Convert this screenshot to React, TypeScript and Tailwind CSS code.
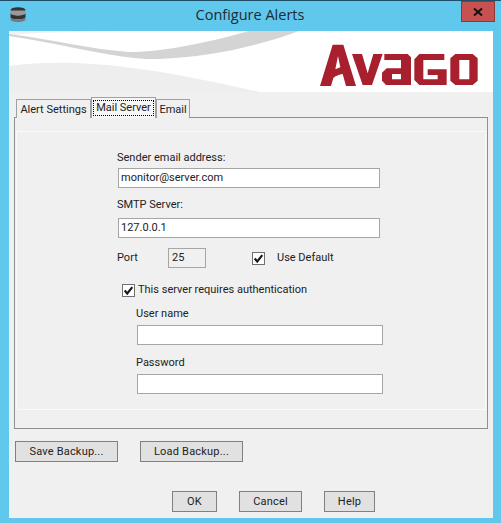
export default function App() {
  const input = "block bg-white border border-[#a6a6a6] leading-[18px] pl-[2px] text-[#222]";
  const btn = "flex items-center justify-center h-[21px] pt-[1px] bg-[#e1e1e1] border border-[#808080] text-[11px] text-[#222] tracking-[0.2px]";
  const Check = () => (
    <span className="flex items-center justify-center w-[13px] h-[13px] bg-white border border-[#707070] shrink-0">
      <svg viewBox="0 0 13 13" className="w-[11px] h-[11px]">
        <path d="M2 6.500 L5 10 L11 2.500" fill="none" stroke="#1a1a1a" strokeWidth="2.6" />
      </svg>
    </span>
  );
  return (
    <div className="relative w-[501px] h-[523px] overflow-hidden bg-[#60c8ec] border-t border-[#1f4f66] pl-[9px] pr-[8px] font-['Roboto',sans-serif] text-[#222] whitespace-nowrap">
      <div className="relative h-[30px] flex items-center justify-center">
        <svg viewBox="0 0 16 16" className="absolute left-[1px] top-[6px] w-[16px] h-[16px]">
          <ellipse cx="8" cy="3" rx="7.500" ry="2.800" fill="#333" />
          <path d="M.5 3.500h15v3c0 1.400-3.300 2.400-7.500 2.400S.5 7.900.5 6.500z" fill="#999" />
          <path d="M.5 6.500c1 1.400 4.300 2.200 7.500 2.200s6.500-.8 7.500-2.200v3.500c0 1.400-3.300 2.300-7.500 2.300S.5 11.400.5 10z" fill="#333" />
          <path d="M.5 10.500c1 1.300 4.300 2.200 7.500 2.200s6.500-.9 7.500-2.200v2c0 1.300-3.300 2.500-7.500 2.500S.5 13.800.5 12.500z" fill="#777" />
        </svg>
        <span className="text-[14.5px] text-[#1c2b33] font-['Open_Sans',sans-serif] relative top-[-1px] left-[-1px]">Configure Alerts</span>
      </div>
      <div className="absolute left-[461px] top-0 w-[34px] h-[21px] bg-[#c75050] border border-[#8a3a3a] flex items-center justify-center">
        <svg viewBox="0 0 10 8" className="w-[10px] h-[8px]">
          <path d="M1 0.500 L9 7.500 M9 0.500 L1 7.500" stroke="#111" strokeWidth="2" />
        </svg>
      </div>

      <div className="w-[484px] h-[487px] bg-[#f0f0f0] flex flex-col">
        <div className="relative h-[61px] bg-white overflow-hidden flex items-start justify-end pt-[9px] pr-[11px]">
          <svg viewBox="0 0 484 61" className="absolute inset-0 w-[484px] h-[61px]">
            <path d="M0 4 C40 1 80 0 120 0 L0 0Z" fill="#f1f1f1" />
            <path d="M0 5 C70 16 110 29 150 28 C200 26 250 15 290 0 L240 0 C190 14 150 21 120 21 C80 18 40 8 0 3Z" fill="#d4d4d4" />
            <path d="M0 35 C60 27 130 33 250 61 L0 61Z" fill="#eeeeee" />
          </svg>
          <svg viewBox="0 0 498 150" className="relative w-[166px] h-[50px]">
            <g fill="#a81f2e" fillRule="evenodd">
              <path d="M12 138 L50 14 L82 14 L120 138 L90 138 L80 102 C70 104 58 108 52 114 L45 138 Z M58 88 C63 86 68 84 73 82 L66 48 Z" />
              <path d="M108 42 L138 42 L155 100 L172 42 L200 42 L168 135 L140 135 Z" />
              <path d="M205 42 L275 42 L285 52 L285 135 L210 135 L198 122 L198 98 L212 85 L255 85 L255 60 L205 60 Z M228 102 L228 118 L255 118 L255 102 Z" />
              <path d="M310 42 L385 42 L385 60 L322 60 L322 118 L365 118 L365 105 L335 105 L335 88 L392 88 L392 135 L310 135 L295 120 L295 58 Z" />
              <path d="M418 42 L470 42 L485 55 L485 122 L470 135 L418 135 L403 122 L403 55 Z M430 60 L430 118 L460 118 L460 60 Z" />
            </g>
          </svg>
        </div>

        <div className="px-[5px] pt-[5px]">
          <div className="relative z-10 flex items-end h-[21px] pl-[2px] mb-[-1px] text-[11px]">
            <div className="h-[19px] w-[75px] bg-[#f0f0f0] border border-b-0 border-[#a0a0a0] flex items-center justify-center pt-[2px]">Alert Settings</div>
            <div className="h-[21px] w-[65px] bg-[#f6f6f6] border border-b-0 border-[#a0a0a0] flex items-center justify-center pb-[1px]">
              <span className="border border-dotted border-black px-[2px] leading-[14px]">Mail Server</span>
            </div>
            <div className="h-[19px] w-[34px] bg-[#f0f0f0] border border-b-0 border-[#a0a0a0] flex items-center justify-center pt-[2px]">Email</div>
          </div>
          <div className="w-[474px] h-[312px] border border-[#8f8f8f] bg-[#f0f0f0] pt-[13px] pl-[1px] pr-[2px]">
            <div className="w-[470px] h-[279px] border border-[#fafafa] pl-[100px] pt-[17px] text-[11px]">
              <div className="leading-[18px]">Sender email address:</div>
              <div className={input + " w-[262px] h-[20px] mt-[1px] mb-[9px] ml-[1px]"}>monitor@server.com</div>
              <div className="leading-[16px]">SMTP Server:</div>
              <div className={input + " w-[262px] h-[20px] mt-[5px] ml-[1px]"}>127.0.0.1</div>
              <div className="flex items-center h-[20px] mt-[10px]">
                <span className="w-[51px]">Port</span>
                <div className="w-[38px] h-[20px] border border-[#a6a6a6] bg-[#f0f0f0] pl-[3px] leading-[18px]">25</div>
                <span className="ml-[46px]"><Check /></span>
                <span className="ml-[12px]">Use Default</span>
              </div>
              <div className="flex items-center h-[16px] mt-[14px] ml-[5px]">
                <Check />
                <span className="ml-[3px]">This server requires authentication</span>
              </div>
              <div className="leading-[18px] mt-[7px] ml-[19px]">User name</div>
              <div className={input + " w-[246px] h-[20px] mt-[2px] ml-[20px]"}></div>
              <div className="leading-[18px] mt-[9px] ml-[19px]">Password</div>
              <div className={input + " w-[246px] h-[20px] mt-[2px] ml-[20px]"}></div>
            </div>
          </div>
        </div>

        <div className="flex pl-[6px] mt-[12px] gap-[22px]">
          <div className={btn + " w-[103px]"}>Save Backup...</div>
          <div className={btn + " w-[103px]"}>Load Backup...</div>
        </div>
        <div className="flex pl-[163px] mt-[29px] gap-[22px]">
          <div className={btn + " w-[45px]"}>OK</div>
          <div className={btn + " w-[63px]"}>Cancel</div>
          <div className={btn + " w-[51px]"}>Help</div>
        </div>
      </div>
    </div>
  );
}
